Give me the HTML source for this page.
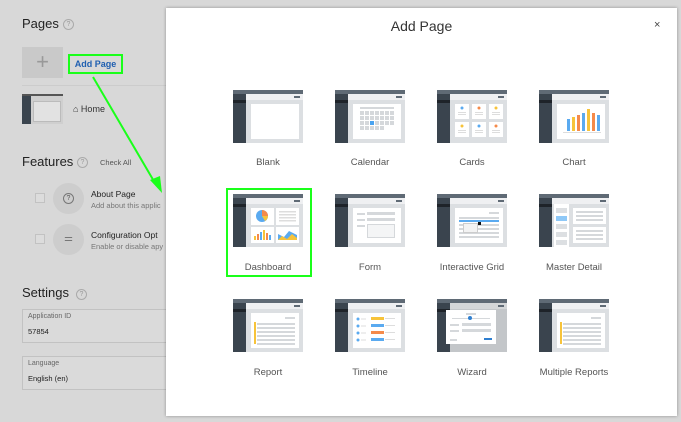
<!DOCTYPE html>
<html><head><style>
*{margin:0;padding:0;box-sizing:border-box}
body{width:681px;height:422px;overflow:hidden;background:#d8d8d8;font-family:"Liberation Sans",sans-serif;position:relative}
.a{position:absolute}
.h{font-size:13px;color:#222}
.q{width:11px;height:11px;border:1px solid #aaa;border-radius:50%;font-size:7px;color:#999;text-align:center;line-height:9px}
.modal{left:166px;top:8px;width:511px;height:408px;background:#fff;box-shadow:0 0 3px rgba(0,0,0,.35)}
.t{position:absolute;width:70px;height:53px;background:#dcdfe2;overflow:hidden}
.t .tb{position:absolute;left:0;top:0;width:70px;height:4px;background:#5f6a75}
.t .sb{position:absolute;left:0;top:4px;width:13px;height:49px;background:#3a444e}
.t .sb i{position:absolute;left:0;top:6px;width:13px;height:3px;background:#1e2329}
.t .hd{position:absolute;left:13px;top:4px;width:57px;height:6px;background:#eff0f2}
.t .hd i{position:absolute;right:3px;top:2px;width:6px;height:2px;background:#5f6a75}
.t .p{position:absolute;left:18px;top:14px;width:48px;height:35px;background:#fff}
.l{position:absolute;width:102px;text-align:center;font-size:9.5px;color:#555}
.ln{position:absolute;height:1.5px;background:#d5d8db}
</style></head><body>
<div class="a h" style="left:22px;top:16px">Pages</div>
<div class="a q" style="left:63px;top:19px">?</div>
<div class="a" style="left:22px;top:47px;width:41px;height:31px;background:#c9c9c9;color:#999;font-size:22px;text-align:center;line-height:30px;font-weight:300">+</div>
<div class="a" style="left:68px;top:54px;width:55px;height:20px;border:2px solid #1aff1a;font-size:9px;font-weight:bold;color:#1f5fb0;text-align:center;line-height:16px">Add Page</div>
<div class="a" style="left:22px;top:85px;width:144px;height:1px;background:#ccc"></div>
<div class="a" style="left:22px;top:94px;width:41px;height:30px;background:#cfcfcf">
 <div class="a" style="left:0;top:0;width:41px;height:2px;background:#555"></div>
 <div class="a" style="left:0;top:2px;width:9px;height:28px;background:#3a444e"></div>
 <div class="a" style="left:11px;top:7px;width:28px;height:21px;background:#e2e2e2;border:1px solid #bbb"></div>
</div>
<div class="a" style="left:73px;top:104px;font-size:9px;color:#333">⌂ Home</div>
<div class="a h" style="left:22px;top:154px">Features</div>
<div class="a q" style="left:77px;top:157px">?</div>
<div class="a" style="left:100px;top:158px;font-size:7.5px;color:#555">Check All</div>
<div class="a" style="left:35px;top:193px;width:10px;height:10px;border:1px solid #c2c2c2;background:#dcdcdc"></div>
<div class="a" style="left:53px;top:183px;width:31px;height:31px;border-radius:50%;background:#cdcdcd"></div>
<div class="a q" style="left:63px;top:193px;border-color:#777;color:#555">?</div>
<div class="a" style="left:91px;top:189px;font-size:8.5px;color:#222">About Page</div>
<div class="a" style="left:91px;top:201px;font-size:7.5px;color:#777">Add about this applic</div>
<div class="a" style="left:35px;top:234px;width:10px;height:10px;border:1px solid #c2c2c2;background:#dcdcdc"></div>
<div class="a" style="left:53px;top:224px;width:31px;height:31px;border-radius:50%;background:#cdcdcd;color:#777;font-size:10px;text-align:center;line-height:30px">⚌</div>
<div class="a" style="left:91px;top:230px;font-size:8.5px;color:#222">Configuration Opt</div>
<div class="a" style="left:91px;top:242px;font-size:7.5px;color:#777">Enable or disable apy</div>
<div class="a h" style="left:22px;top:285px">Settings</div>
<div class="a q" style="left:76px;top:289px">?</div>
<div class="a" style="left:22px;top:309px;width:150px;height:34px;border:1px solid #c2c2c2;background:#dadada">
 <div class="a" style="left:5px;top:3px;font-size:7px;color:#666">Application ID</div>
 <div class="a" style="left:5px;top:17px;font-size:7.5px;color:#222">57854</div></div>
<div class="a" style="left:22px;top:356px;width:150px;height:34px;border:1px solid #c2c2c2;background:#dadada">
 <div class="a" style="left:5px;top:3px;font-size:7px;color:#666">Language</div>
 <div class="a" style="left:5px;top:17px;font-size:7.5px;color:#222">English (en)</div></div>

<div class="a modal">
 <div class="a" style="left:0;top:10px;width:511px;text-align:center;font-size:14px;color:#333">Add Page</div>
 <div class="a" style="left:488px;top:11px;font-size:11px;color:#444">×</div>
</div>

<div class="t" style="left:233px;top:90px"><div class="tb"></div><div class="sb"><i></i></div><div class="hd"><i></i></div><div class="p"></div></div>
<div class="t" style="left:335px;top:90px"><div class="tb"></div><div class="sb"><i></i></div><div class="hd"><i></i></div><div class="p">
 <div class="a" style="left:7px;top:3px;width:34px;height:2px;background:#d5d8db"></div>
 <svg class="a" style="left:7px;top:7px" width="34" height="24"><g fill="#d5d8db">
 <rect x="0" y="0" width="4" height="4"/><rect x="5" y="0" width="4" height="4"/><rect x="10" y="0" width="4" height="4"/><rect x="15" y="0" width="4" height="4"/><rect x="20" y="0" width="4" height="4"/><rect x="25" y="0" width="4" height="4"/><rect x="30" y="0" width="4" height="4"/>
 <rect x="0" y="5" width="4" height="4"/><rect x="5" y="5" width="4" height="4"/><rect x="10" y="5" width="4" height="4"/><rect x="15" y="5" width="4" height="4"/><rect x="20" y="5" width="4" height="4"/><rect x="25" y="5" width="4" height="4"/><rect x="30" y="5" width="4" height="4"/>
 <rect x="0" y="10" width="4" height="4"/><rect x="5" y="10" width="4" height="4"/><rect x="15" y="10" width="4" height="4"/><rect x="20" y="10" width="4" height="4"/><rect x="25" y="10" width="4" height="4"/><rect x="30" y="10" width="4" height="4"/>
 <rect x="0" y="15" width="4" height="4"/><rect x="5" y="15" width="4" height="4"/><rect x="10" y="15" width="4" height="4"/><rect x="15" y="15" width="4" height="4"/><rect x="20" y="15" width="4" height="4"/></g>
 <rect x="10" y="10" width="4" height="4" fill="#4aa3f0"/></svg></div></div>
<div class="t" style="left:437px;top:90px"><div class="tb"></div><div class="sb"><i></i></div><div class="hd"><i></i></div>
 <svg class="a" style="left:18px;top:14px" width="48" height="35"><g fill="#fff"><rect x="0" y="0" width="14" height="15"/><rect x="17" y="0" width="14" height="15"/><rect x="34" y="0" width="14" height="15"/><rect x="0" y="18" width="14" height="15"/><rect x="17" y="18" width="14" height="15"/><rect x="34" y="18" width="14" height="15"/></g>
 <circle cx="7" cy="4" r="1.5" fill="#5aaaf0"/><circle cx="24" cy="4" r="1.5" fill="#f58a4a"/><circle cx="41" cy="4" r="1.5" fill="#f7c33a"/><circle cx="7" cy="22" r="1.5" fill="#f7c33a"/><circle cx="24" cy="22" r="1.5" fill="#5aaaf0"/><circle cx="41" cy="22" r="1.5" fill="#f58a4a"/>
 <g fill="#ddd"><rect x="3" y="8" width="8" height="1"/><rect x="3" y="10" width="8" height="1"/><rect x="20" y="8" width="8" height="1"/><rect x="20" y="10" width="8" height="1"/><rect x="37" y="8" width="8" height="1"/><rect x="37" y="10" width="8" height="1"/><rect x="3" y="26" width="8" height="1"/><rect x="3" y="28" width="8" height="1"/><rect x="20" y="26" width="8" height="1"/><rect x="20" y="28" width="8" height="1"/><rect x="37" y="26" width="8" height="1"/><rect x="37" y="28" width="8" height="1"/></g></svg></div>
<div class="t" style="left:539px;top:90px"><div class="tb"></div><div class="sb"><i></i></div><div class="hd"><i></i></div><div class="p">
 <svg class="a" style="left:6px;top:5px" width="38" height="26"><rect x="4" y="10" width="3" height="12" fill="#5aaaf0"/><rect x="9" y="8" width="3" height="14" fill="#f7c33a"/><rect x="14" y="6" width="3" height="16" fill="#f58a4a"/><rect x="19" y="4" width="3" height="18" fill="#5aaaf0"/><rect x="24" y="0" width="3" height="22" fill="#f7c33a"/><rect x="29" y="4" width="3" height="18" fill="#f58a4a"/><rect x="34" y="6" width="3" height="16" fill="#5aaaf0"/><rect x="0" y="23" width="38" height="1" fill="#ddd"/></svg></div></div>
<div class="l" style="left:217px;top:157px">Blank</div>
<div class="l" style="left:319px;top:157px">Calendar</div>
<div class="l" style="left:421px;top:157px">Cards</div>
<div class="l" style="left:523px;top:157px">Chart</div>

<div class="a" style="left:226px;top:188px;width:86px;height:89px;border:2px solid #1aff1a"></div>
<div class="t" style="left:233px;top:194px"><div class="tb"></div><div class="sb"><i></i></div><div class="hd"><i></i></div>
 <svg class="a" style="left:18px;top:14px" width="48" height="35"><g fill="#fff"><rect x="0" y="0" width="23" height="17"/><rect x="25" y="0" width="23" height="17"/><rect x="0" y="19" width="23" height="16"/><rect x="25" y="19" width="23" height="16"/></g>
 <circle cx="11" cy="8" r="6" fill="#5aaaf0"/><path d="M11 8 L11 2 A6 6 0 0 1 17 8 Z" fill="#f58a4a"/><path d="M11 8 L17 8 A6 6 0 0 1 14 13 Z" fill="#f7c33a"/>
 <g fill="#ddd"><rect x="28" y="3" width="17" height="1.5"/><rect x="28" y="6" width="17" height="1.5"/><rect x="28" y="9" width="17" height="1.5"/><rect x="28" y="12" width="17" height="1.5"/></g>
 <rect x="3" y="28" width="2" height="4" fill="#f7c33a"/><rect x="6" y="26" width="2" height="6" fill="#f58a4a"/><rect x="9" y="24" width="2" height="8" fill="#5aaaf0"/><rect x="12" y="22" width="2" height="10" fill="#f7c33a"/><rect x="15" y="25" width="2" height="7" fill="#f58a4a"/><rect x="18" y="27" width="2" height="5" fill="#5aaaf0"/>
 <path d="M27 32 L27 26 L33 29 L38 23 L46 27 L46 32 Z" fill="#5aaaf0"/><path d="M27 32 L31 28 L36 31 L41 26 L46 30 L46 32 Z" fill="#f7c33a"/></svg></div>
<div class="t" style="left:335px;top:194px"><div class="tb"></div><div class="sb"><i></i></div><div class="hd"><i></i></div><div class="p">
 <div class="ln" style="left:4px;top:5px;width:8px"></div><div class="ln" style="left:14px;top:4px;width:28px;height:3px"></div>
 <div class="ln" style="left:4px;top:11px;width:8px"></div><div class="ln" style="left:14px;top:10px;width:28px;height:3px"></div>
 <div class="ln" style="left:4px;top:17px;width:8px"></div><div class="a" style="left:14px;top:16px;width:28px;height:14px;border:1px solid #d5d8db;background:#f4f5f6"></div></div></div>
<div class="t" style="left:437px;top:194px"><div class="tb"></div><div class="sb"><i></i></div><div class="hd"><i></i></div><div class="p">
 <div class="ln" style="left:34px;top:4px;width:10px"></div>
 <div class="ln" style="left:4px;top:9px;width:40px"></div>
 <div class="a" style="left:4px;top:12px;width:40px;height:2px;background:#5aaaf0"></div>
 <div class="ln" style="left:4px;top:16px;width:40px"></div><div class="ln" style="left:4px;top:20px;width:40px"></div><div class="ln" style="left:4px;top:24px;width:40px"></div><div class="ln" style="left:4px;top:28px;width:40px"></div>
 <div class="a" style="left:8px;top:15px;width:15px;height:10px;border:1px solid #ccc;background:#f3f3f3"></div>
 <div class="a" style="left:23px;top:14px;width:3px;height:3px;background:#111"></div></div></div>
<div class="t" style="left:539px;top:194px"><div class="tb"></div><div class="sb"><i></i></div><div class="hd"><i></i></div>
 <div class="a" style="left:15px;top:10px;width:15px;height:43px;background:#fff"></div>
 <div class="a" style="left:17px;top:14px;width:11px;height:5px;background:#dcdfe2"></div>
 <div class="a" style="left:17px;top:22px;width:11px;height:5px;background:#8ec8f7"></div>
 <div class="a" style="left:17px;top:30px;width:11px;height:5px;background:#dcdfe2"></div>
 <div class="a" style="left:17px;top:38px;width:11px;height:5px;background:#dcdfe2"></div>
 <div class="a" style="left:17px;top:46px;width:11px;height:5px;background:#dcdfe2"></div>
 <div class="a" style="left:34px;top:14px;width:33px;height:16px;background:#fff"><div class="ln" style="left:3px;top:3px;width:27px"></div><div class="ln" style="left:3px;top:7px;width:27px"></div><div class="ln" style="left:3px;top:11px;width:27px"></div></div>
 <div class="a" style="left:34px;top:33px;width:33px;height:16px;background:#fff"><div class="ln" style="left:3px;top:3px;width:27px"></div><div class="ln" style="left:3px;top:7px;width:27px"></div><div class="ln" style="left:3px;top:11px;width:27px"></div></div></div>
<div class="l" style="left:217px;top:262px">Dashboard</div>
<div class="l" style="left:319px;top:262px">Form</div>
<div class="l" style="left:421px;top:262px">Interactive Grid</div>
<div class="l" style="left:523px;top:262px">Master Detail</div>

<div class="t" style="left:233px;top:299px"><div class="tb"></div><div class="sb"><i></i></div><div class="hd"><i></i></div><div class="p">
 <div class="ln" style="left:34px;top:4px;width:10px"></div>
 <div class="a" style="left:3px;top:9px;width:2px;height:22px;background:#f7c33a"></div>
 <div class="ln" style="left:6px;top:10px;width:38px"></div><div class="ln" style="left:6px;top:14px;width:38px"></div><div class="ln" style="left:6px;top:18px;width:38px"></div><div class="ln" style="left:6px;top:22px;width:38px"></div><div class="ln" style="left:6px;top:26px;width:38px"></div><div class="ln" style="left:6px;top:30px;width:38px"></div></div></div>
<div class="t" style="left:335px;top:299px"><div class="tb"></div><div class="sb"><i></i></div><div class="hd"><i></i></div><div class="p">
 <svg class="a" style="left:0;top:0" width="48" height="35"><g fill="#5aaaf0"><circle cx="5" cy="6" r="1.5"/><circle cx="5" cy="13" r="1.5"/><circle cx="5" cy="20" r="1.5"/><circle cx="5" cy="27" r="1.5"/></g>
 <g fill="#ddd"><rect x="8" y="5.5" width="5" height="1"/><rect x="8" y="12.5" width="5" height="1"/><rect x="8" y="19.5" width="5" height="1"/><rect x="8" y="26.5" width="5" height="1"/><rect x="32" y="5" width="10" height="1"/><rect x="32" y="12" width="10" height="1"/><rect x="32" y="19" width="10" height="1"/><rect x="32" y="26" width="10" height="1"/></g>
 <rect x="18" y="4" width="13" height="3" fill="#f7c33a"/><rect x="18" y="11" width="13" height="3" fill="#5aaaf0"/><rect x="18" y="18" width="13" height="3" fill="#f58a4a"/><rect x="18" y="25" width="13" height="3" fill="#5aaaf0"/></svg></div></div>
<div class="t" style="left:437px;top:299px;background:#c3c6c9"><div class="tb"></div><div class="sb"><i></i></div><div class="hd" style="background:#d4d6d8"><i></i></div>
 <div class="a" style="left:9px;top:11px;width:50px;height:34px;background:#fff">
 <div class="ln" style="left:20px;top:3px;width:10px"></div>
 <div class="ln" style="left:6px;top:8px;width:38px;height:1px"></div>
 <div class="a" style="left:22px;top:6px;width:4px;height:4px;border-radius:50%;background:#2f7fd0"></div>
 <div class="ln" style="left:4px;top:14px;width:9px"></div><div class="ln" style="left:16px;top:13px;width:29px;height:3px"></div>
 <div class="ln" style="left:4px;top:20px;width:9px"></div><div class="ln" style="left:16px;top:19px;width:29px;height:3px"></div>
 <div class="ln" style="left:4px;top:29px;width:7px"></div><div class="a" style="left:38px;top:28px;width:8px;height:2px;background:#2f7fd0"></div></div></div>
<div class="t" style="left:539px;top:299px"><div class="tb"></div><div class="sb"><i></i></div><div class="hd"><i></i></div><div class="p">
 <div class="ln" style="left:34px;top:4px;width:10px"></div>
 <div class="a" style="left:3px;top:9px;width:2px;height:22px;background:#f7c33a"></div>
 <div class="ln" style="left:6px;top:10px;width:38px"></div><div class="ln" style="left:6px;top:14px;width:38px"></div><div class="ln" style="left:6px;top:18px;width:38px"></div><div class="ln" style="left:6px;top:22px;width:38px"></div><div class="ln" style="left:6px;top:26px;width:38px"></div><div class="ln" style="left:6px;top:30px;width:38px"></div></div></div>
<div class="l" style="left:217px;top:367px">Report</div>
<div class="l" style="left:319px;top:367px">Timeline</div>
<div class="l" style="left:421px;top:367px">Wizard</div>
<div class="l" style="left:523px;top:367px">Multiple Reports</div>

<svg class="a" style="left:0;top:0" width="681" height="422"><line x1="93" y1="77" x2="155" y2="183" stroke="#1aff1a" stroke-width="2"/><path d="M150 180 L162 193 L160 176 Z" fill="#1aff1a"/></svg>
</body></html>
